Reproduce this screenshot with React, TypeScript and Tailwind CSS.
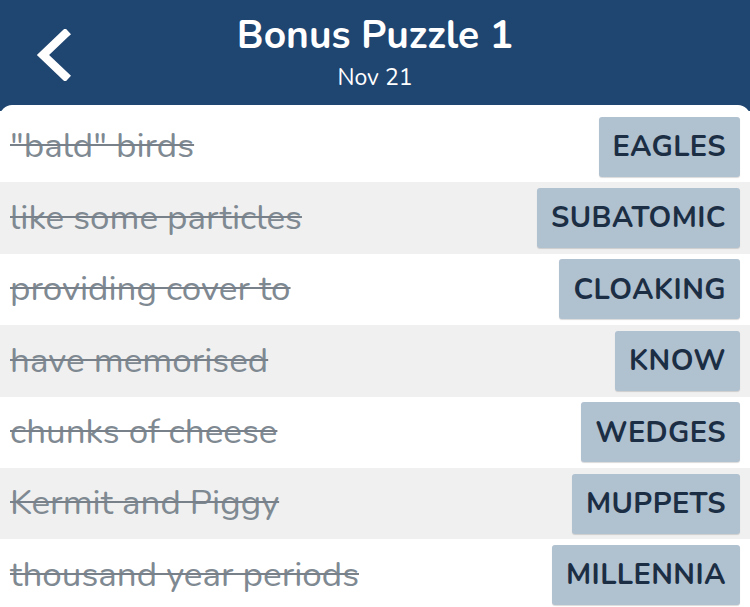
import React from 'react';

const rows = [
    { clue: '"bald" birds', answer: 'EAGLES' },
    { clue: 'like some particles', answer: 'SUBATOMIC' },
    { clue: 'providing cover to', answer: 'CLOAKING' },
    { clue: 'have memorised', answer: 'KNOW' },
    { clue: 'chunks of cheese', answer: 'WEDGES' },
    { clue: 'Kermit and Piggy', answer: 'MUPPETS' },
    { clue: 'thousand year periods', answer: 'MILLENNIA' },
];

const App: React.FC = () => {
    return (
        <div className="w-[750px] h-[607px] overflow-hidden bg-[#1f4571] font-['Nunito','Lato',sans-serif]">
            {/* Header */}
            <div className="relative h-[105px] flex flex-col items-center text-white">
                <svg className="absolute left-[34px] top-[29px]" width="38" height="52" viewBox="0 0 38 52">
                    <path d="M31 5 L9 26 L31 47" fill="none" stroke="white" strokeWidth="8.5" strokeLinecap="square" strokeLinejoin="miter" />
                </svg>
                <h1 className="mt-[13px] text-[39px] leading-[46px] font-bold">Bonus Puzzle 1</h1>
                <p className="text-[23px] leading-[28px] mt-[5px]">Nov 21</p>
            </div>

            {/* Clue list */}
            <div className="bg-white rounded-t-[12px] pt-[6px] h-[520px]">
                {rows.map((row, i) => (
                    <div
                        key={row.answer}
                        className={`h-[71.4px] flex items-center justify-between pl-[10px] pr-[10px] ${i % 2 === 1 ? 'bg-[#f0f0f0]' : 'bg-white'}`}
                    >
                        <span className="text-[35px] text-[#7f8992] line-through decoration-[#78818a] decoration-2">{row.clue}</span>
                        <span className="h-[60px] flex items-center px-[14px] rounded-[3px] bg-[#b0c1d0] text-[#1b2e44] text-[29px] font-bold tracking-[0.4px] shadow-[0_1px_1px_rgba(0,0,0,0.15)]">
                            {row.answer}
                        </span>
                    </div>
                ))}
            </div>
        </div>
    );
};

export default App;
